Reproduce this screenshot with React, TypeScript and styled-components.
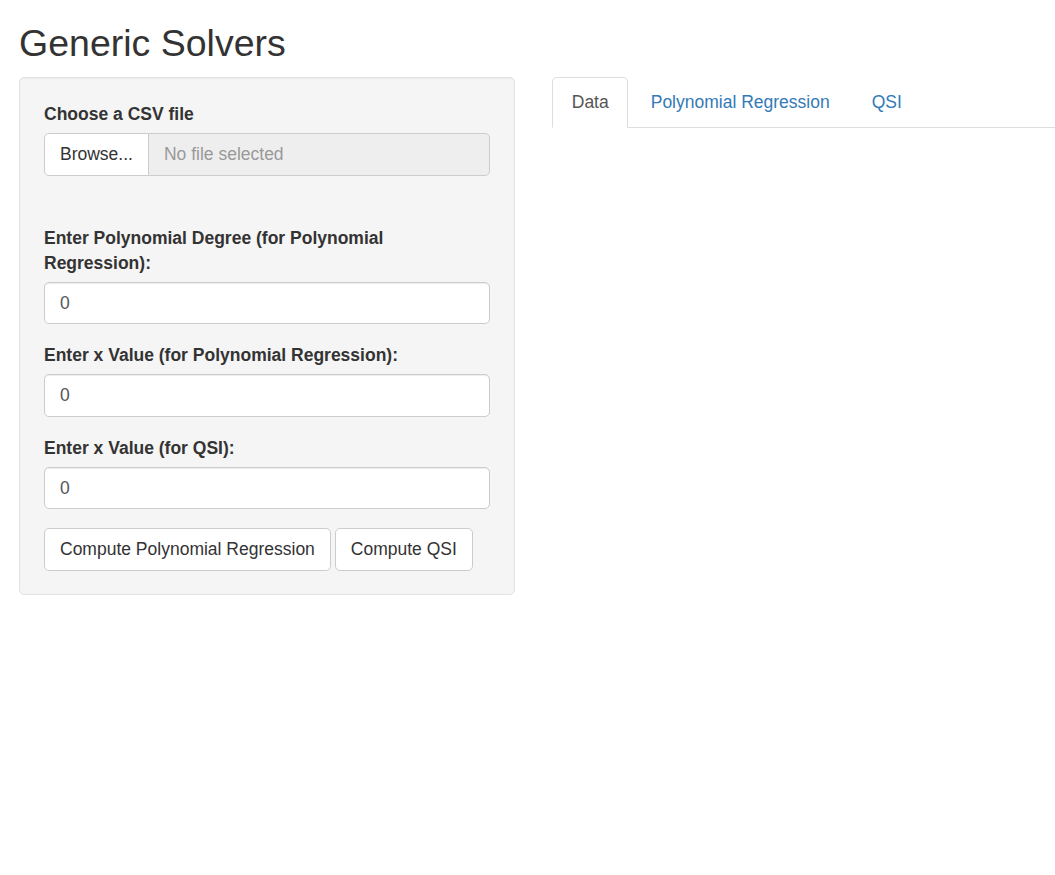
import React from "react";
import styled, { createGlobalStyle } from "styled-components";

const GlobalStyle = createGlobalStyle`
  html, body { margin: 0; padding: 0; background: #fff; }
  body {
    font-family: "Liberation Sans", Arial, Helvetica, sans-serif;
    font-size: 17.5px;
    line-height: 25px;
    color: #333;
    overflow: hidden;
  }
  * { box-sizing: border-box; }
`;

const Page = styled.div`
  padding: 0 0 0 19px;
`;

const Title = styled.h2`
  margin: 23px 0 13px;
  font-size: 37.5px;
  font-weight: 500;
  line-height: 41px;
  color: #333;
`;

const Row = styled.div`
  display: flex;
  align-items: flex-start;
`;

const Well = styled.div`
  width: 496px;
  flex: none;
  background: #f5f5f5;
  border: 1px solid #e3e3e3;
  border-radius: 5px;
  padding: 23.75px 24px;
  box-shadow: inset 0 1px 1px rgba(0, 0, 0, 0.05);
`;

const FormGroup = styled.div<{ $bottom?: number }>`
  display: flex;
  flex-direction: column;
  margin-bottom: ${(p) => p.$bottom ?? 18.75}px;
`;

const Label = styled.label`
  font-weight: bold;
  font-size: 17.5px;
  line-height: 25px;
  margin-bottom: 6.25px;
  max-width: 380px;
`;

const InputGroup = styled.div`
  display: flex;
  height: 42.5px;
`;

const BrowseButton = styled.span`
  display: flex;
  align-items: center;
  padding: 0 15px;
  background: #fff;
  border: 1px solid #ccc;
  border-radius: 5px 0 0 5px;
  color: #333;
`;

const FileName = styled.span`
  flex: 1;
  display: flex;
  align-items: center;
  padding: 0 15px;
  background: #eee;
  border: 1px solid #ccc;
  border-left: none;
  border-radius: 0 5px 5px 0;
  color: #999;
`;

const TextInput = styled.input`
  height: 42.5px;
  width: 100%;
  padding: 7.5px 15px;
  font-family: inherit;
  font-size: 17.5px;
  color: #555;
  background: #fff;
  border: 1px solid #ccc;
  border-radius: 5px;
  box-shadow: inset 0 1px 1px rgba(0, 0, 0, 0.075);
  outline: none;
`;

const ButtonRow = styled.div`
  display: flex;
  gap: 4px;
`;

const Button = styled.button`
  height: 42.5px;
  padding: 7.5px 15px;
  font-family: inherit;
  font-size: 17.5px;
  line-height: 25px;
  color: #333;
  background: #fff;
  border: 1px solid #ccc;
  border-radius: 5px;
  cursor: pointer;
`;

const Main = styled.div`
  flex: 1;
  margin-left: 37px;
`;

const Tabs = styled.ul`
  display: flex;
  list-style: none;
  margin: 0;
  padding: 0;
  border-bottom: 1px solid #ddd;
`;

const Tab = styled.li<{ $active?: boolean }>`
  margin-right: 2.5px;
  margin-bottom: -1px;
  padding: 11.5px 18.75px 12.5px;
  line-height: 25px;
  border: 1px solid ${(p) => (p.$active ? "#ddd" : "transparent")};
  border-bottom-color: transparent;
  border-radius: 5px 5px 0 0;
  background: ${(p) => (p.$active ? "#fff" : "transparent")};
  color: ${(p) => (p.$active ? "#555" : "#337ab7")};
  cursor: pointer;
`;

export default function App() {
  return (
    <Page>
      <GlobalStyle />
      <Title>Generic Solvers</Title>
      <Row>
        <Well>
          <FormGroup $bottom={50}>
            <Label>Choose a CSV file</Label>
            <InputGroup>
              <BrowseButton>Browse...</BrowseButton>
              <FileName>No file selected</FileName>
            </InputGroup>
          </FormGroup>
          <FormGroup>
            <Label>Enter Polynomial Degree (for Polynomial Regression):</Label>
            <TextInput type="number" defaultValue="0" />
          </FormGroup>
          <FormGroup>
            <Label>Enter x Value (for Polynomial Regression):</Label>
            <TextInput type="number" defaultValue="0" />
          </FormGroup>
          <FormGroup>
            <Label>Enter x Value (for QSI):</Label>
            <TextInput type="number" defaultValue="0" />
          </FormGroup>
          <ButtonRow>
            <Button>Compute Polynomial Regression</Button>
            <Button>Compute QSI</Button>
          </ButtonRow>
        </Well>
        <Main>
          <Tabs>
            <Tab $active>Data</Tab>
            <Tab>Polynomial Regression</Tab>
            <Tab>QSI</Tab>
          </Tabs>
        </Main>
      </Row>
    </Page>
  );
}
